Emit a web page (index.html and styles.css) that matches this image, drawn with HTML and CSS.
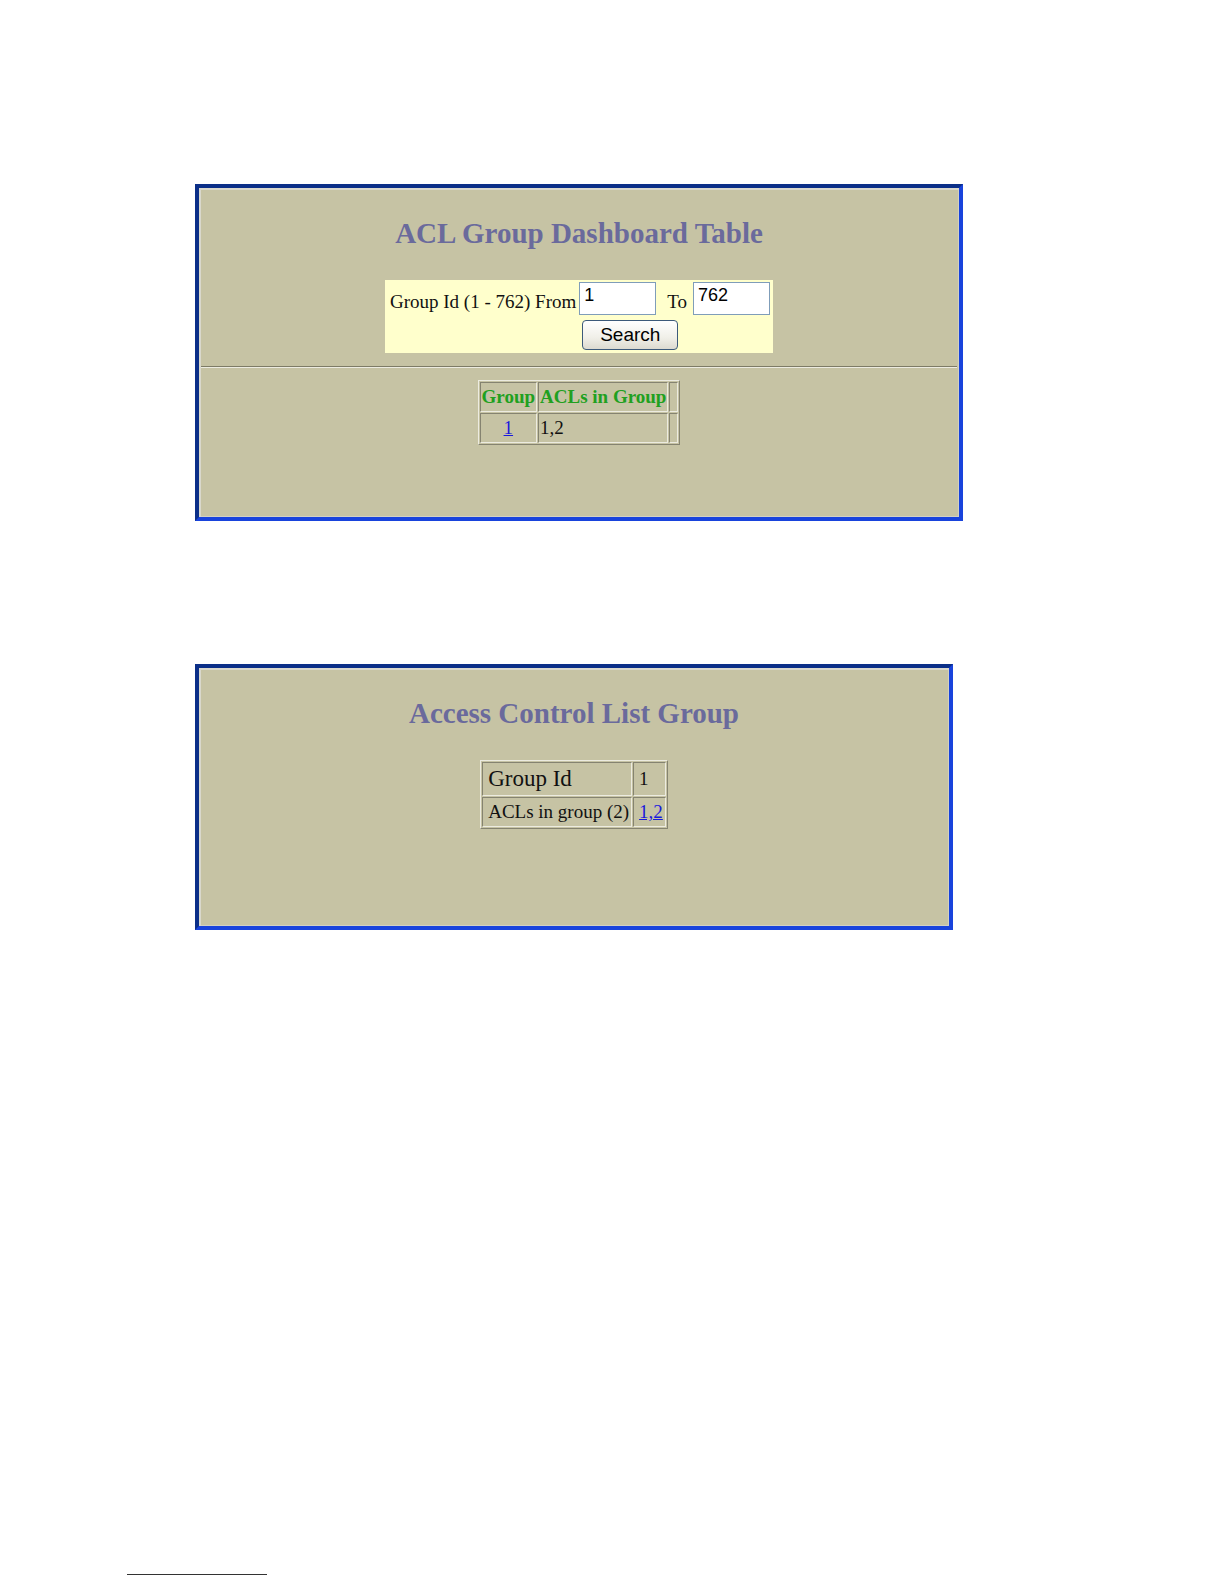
FILE: index.html
```html
<!DOCTYPE html>
<html>
<head>
<meta charset="utf-8">
<title>ACL Group</title>
<link rel="stylesheet" href="styles.css">
</head>
<body>
<div class="page">
  <div class="panel panel-a">
    <h1 class="title">ACL Group Dashboard Table</h1>
    <form class="search">
      <span class="label">Group Id (1 - 762) From</span>
      <input class="field" type="text" value="1">
      <span class="to">To</span>
      <input class="field" type="text" value="762">
      <button class="btn" type="button">Search</button>
    </form>
    <div class="rule"></div>
    <table class="grid grid-a">
      <tr>
        <th class="c-group">Group</th>
        <th class="c-acls">ACLs in Group</th>
        <th class="c-pad"></th>
      </tr>
      <tr>
        <td class="c-group center"><a href="#">1</a></td>
        <td class="c-acls">1,2</td>
        <td class="c-pad"></td>
      </tr>
    </table>
  </div>

  <div class="panel panel-b">
    <h1 class="title title-b">Access Control List Group</h1>
    <table class="grid grid-b">
      <tr class="row-big">
        <td class="k">Group Id</td>
        <td class="v">1</td>
      </tr>
      <tr>
        <td class="k">ACLs in group (2)</td>
        <td class="v"><a href="#">1,2</a></td>
      </tr>
    </table>
  </div>

  <div class="foot-rule"></div>
</div>
</body>
</html>
```

FILE: styles.css
```css
html, body {
  margin: 0;
  padding: 0;
  background: #ffffff;
}

.page {
  padding: 184px 0 0 127px;
  font-family: "Liberation Serif", "Times New Roman", serif;
  color: #111111;
}

.panel {
  box-sizing: border-box;
  margin-left: 68px;
  background: #c6c3a4;
  border: 4px solid;
  border-color: #0b2f88 #1843dc #1843dc #0b2f88;
  box-shadow: inset 2px 2px 0 #d9d8cc, inset -1px -1px 0 #d2d1c2;
  display: flex;
  flex-direction: column;
  align-items: center;
}

.panel-a {
  width: 768px;
  padding: 28px 0 72px 0;
}

.panel-b {
  width: 758px;
  margin-top: 143px;
  padding: 28px 0 97px 0;
}

.title {
  margin: 0;
  font-size: 29px;
  line-height: 34px;
  font-weight: bold;
  color: #6a6a9c;
}

.search {
  margin: 30px 0 0 0;
  background: #ffffcc;
  padding: 2px 3px 3px 5px;
  display: grid;
  grid-template-columns: auto 77px auto 77px;
  row-gap: 5px;
  align-items: center;
}

.label {
  font-size: 19px;
  line-height: 21px;
  padding-top: 6px;
  padding-right: 3px;
  white-space: nowrap;
}

.to {
  font-size: 19px;
  line-height: 21px;
  padding: 6px 6px 0 11px;
}

.field {
  box-sizing: border-box;
  width: 77px;
  height: 33px;
  margin: 0;
  border: 1px solid #7f9db9;
  background: #ffffff;
  font-family: "Liberation Sans", Arial, sans-serif;
  font-size: 18px;
  padding: 0 4px 6px 4px;
  color: #000000;
}

.btn {
  grid-column: 2 / span 3;
  justify-self: start;
  margin-left: 3px;
  box-sizing: border-box;
  width: 96px;
  height: 30px;
  border: 1px solid #3c5a7a;
  border-radius: 4px;
  background: linear-gradient(#ffffff, #f0efe8 60%, #dcdad0);
  font-family: "Liberation Sans", Arial, sans-serif;
  font-size: 19px;
  color: #000000;
  padding: 0;
}

.rule {
  align-self: stretch;
  margin: 13px 2px 0 2px;
  height: 0;
  border-top: 1px solid #7d7b66;
  border-bottom: 1px solid #ecebe0;
}

.grid {
  border-collapse: separate;
  border-spacing: 1px;
  border: 1px solid;
  border-color: #ecebe0 #858370 #858370 #ecebe0;
}

.grid th, .grid td {
  border: 1px solid;
  border-color: #858370 #ecebe0 #ecebe0 #858370;
  padding: 3px 1px;
  font-size: 19px;
  line-height: 22px;
  text-align: left;
}

.grid th {
  color: #20a020;
  font-weight: bold;
}

.grid-a {
  margin-top: 12px;
}

.c-pad {
  width: 7px;
  padding: 0 !important;
}

.center {
  text-align: center !important;
}

.grid a {
  color: #1a1adc;
  text-decoration: underline;
}

.grid-b {
  margin-top: 30px;
}

.grid-b td.k {
  padding: 3px 2px 3px 5px;
}

.grid-b td.v {
  padding: 3px 2px 3px 5px;
}

.grid-b .row-big td.k {
  font-size: 23px;
  line-height: 26px;
}

.foot-rule {
  margin-top: 644px;
  width: 140px;
  height: 1px;
  background: #333333;
}
```
